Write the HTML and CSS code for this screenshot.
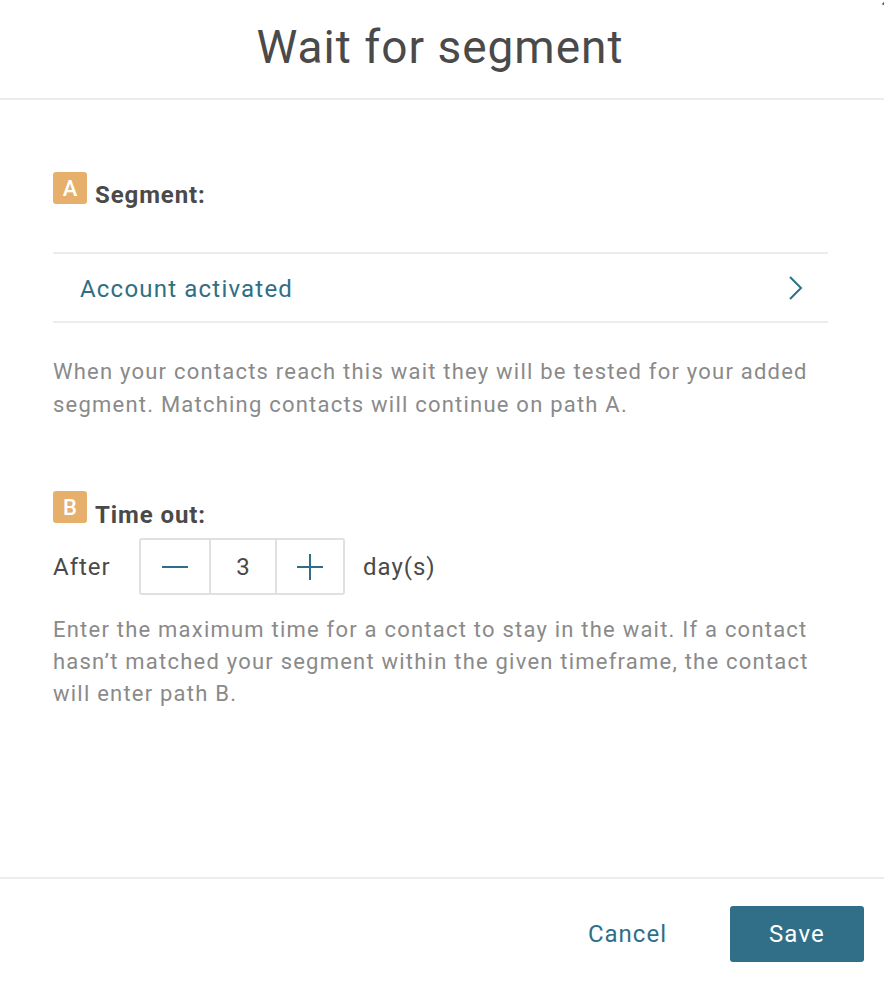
FILE: index.html
```html
<!DOCTYPE html>
<html>
<head>
<meta charset="utf-8">
<link rel="stylesheet" href="styles.css">
</head>
<body>
<div class="dialog">
  <span class="corner"></span>
  <header class="header">
    <h1 class="title">Wait for segment</h1>
  </header>
  <main class="content">
    <section class="section seg">
      <div class="label"><span class="badge">A</span><span class="label-text">Segment:</span></div>
      <div class="select-row">
        <span class="select-text">Account activated</span>
        <svg class="chevron" width="16" height="26" viewBox="0 0 16 26"><path d="M2 2 L13 13 L2 24" fill="none" stroke="#2e6f87" stroke-width="2"/></svg>
      </div>
      <p class="help help-a">When your contacts reach this wait they will be tested for your added segment. Matching contacts will continue on path A.</p>
    </section>
    <section class="section timeout">
      <div class="label"><span class="badge">B</span><span class="label-text">Time out:</span></div>
      <div class="after-row">
        <span class="after">After</span>
        <div class="stepper">
          <button class="step minus" aria-label="decrease"><svg width="26" height="26" viewBox="0 0 26 26"><path d="M0 13 H26" stroke="#2e6f87" stroke-width="2"/></svg></button>
          <span class="value">3</span>
          <button class="step plus" aria-label="increase"><svg width="26" height="26" viewBox="0 0 26 26"><path d="M0 13 H26 M13 0 V26" stroke="#2e6f87" stroke-width="2"/></svg></button>
        </div>
        <span class="days">day(s)</span>
      </div>
      <p class="help help-b">Enter the maximum time for a contact to stay in the wait. If a contact hasn’t matched your segment within the given timeframe, the contact will enter path B.</p>
    </section>
  </main>
  <footer class="footer">
    <button class="btn-cancel">Cancel</button>
    <button class="btn-save">Save</button>
  </footer>
</div>
</body>
</html>
```
FILE: styles.css
```css
* { box-sizing: border-box; }
html, body { margin: 0; padding: 0; background: #fff; }
body { font-family: Roboto, "Noto Sans", sans-serif; color: #4a4a4a; }
.dialog { width: 884px; height: 984px; display: flex; flex-direction: column; position: relative; overflow: hidden; }
.corner { position: absolute; right: -4px; top: -6px; width: 8px; height: 10px; border-right: 2px solid #2e6f87; transform: rotate(45deg); }
.header { height: 100px; border-bottom: 2px solid #ececec; display: flex; justify-content: center; align-items: flex-start; padding-right: 4px; }
.title { margin: 17px 0 0; font-size: 46px; font-weight: 400; color: #4a4a4a; letter-spacing: 1px; line-height: 60px; }
.content { flex: 1; padding: 72px 56px 0 53px; }
.label { display: flex; align-items: center; height: 32px; }
.badge { width: 34px; height: 32px; background: #e6b06c; color: #fff; border-radius: 3px; font-size: 22px; font-weight: 500; display: flex; align-items: center; justify-content: center; margin-right: 8px; }
.label-text { font-size: 24px; font-weight: 700; color: #4a4a4a; margin-top: 13px; letter-spacing: 0.9px; }
.select-row { margin-top: 48px; height: 71px; border-top: 2px solid #ececec; border-bottom: 2px solid #ececec; display: flex; align-items: center; justify-content: space-between; padding: 0 24px 0 27px; }
.select-text { font-size: 24px; color: #2e6f87; letter-spacing: 1.2px; margin-top: 2px; }
.help { margin: 0; font-size: 22px; color: #8a8a8a; letter-spacing: 1.22px; }
.help-a { margin-top: 32px; line-height: 33px; }
.help-b { margin-top: 19px; line-height: 32px; }
.timeout { margin-top: 70px; }
.timeout .label-text { margin-top: 16px; }
.after-row { display: flex; align-items: center; margin-top: 15px; }
.after, .days { font-size: 24px; color: #4a4a4a; letter-spacing: 1px; }
.after { width: 86px; }
.days { margin-left: 18px; }
.stepper { display: flex; height: 57px; border: 2px solid #e0e0e0; border-radius: 3px; }
.step { width: 68px; background: #fff; border: 0; padding: 0; display: flex; align-items: center; justify-content: center; }
.step.plus { width: 66px; }
.value { width: 68px; border-left: 2px solid #e0e0e0; border-right: 2px solid #e0e0e0; display: flex; align-items: center; justify-content: center; font-size: 24px; color: #4a4a4a; }
.footer { height: 107px; border-top: 2px solid #ececec; display: flex; align-items: center; justify-content: flex-end; padding: 4px 20px 0 0; }
.btn-cancel { background: none; border: 0; font-family: inherit; font-size: 24px; color: #2e6f87; letter-spacing: 1px; margin-right: 63px; padding: 0; }
.btn-save { width: 134px; height: 56px; background: #306f87; color: #fff; border: 0; border-radius: 3px; font-family: inherit; font-size: 24px; letter-spacing: 1.2px; }
```
